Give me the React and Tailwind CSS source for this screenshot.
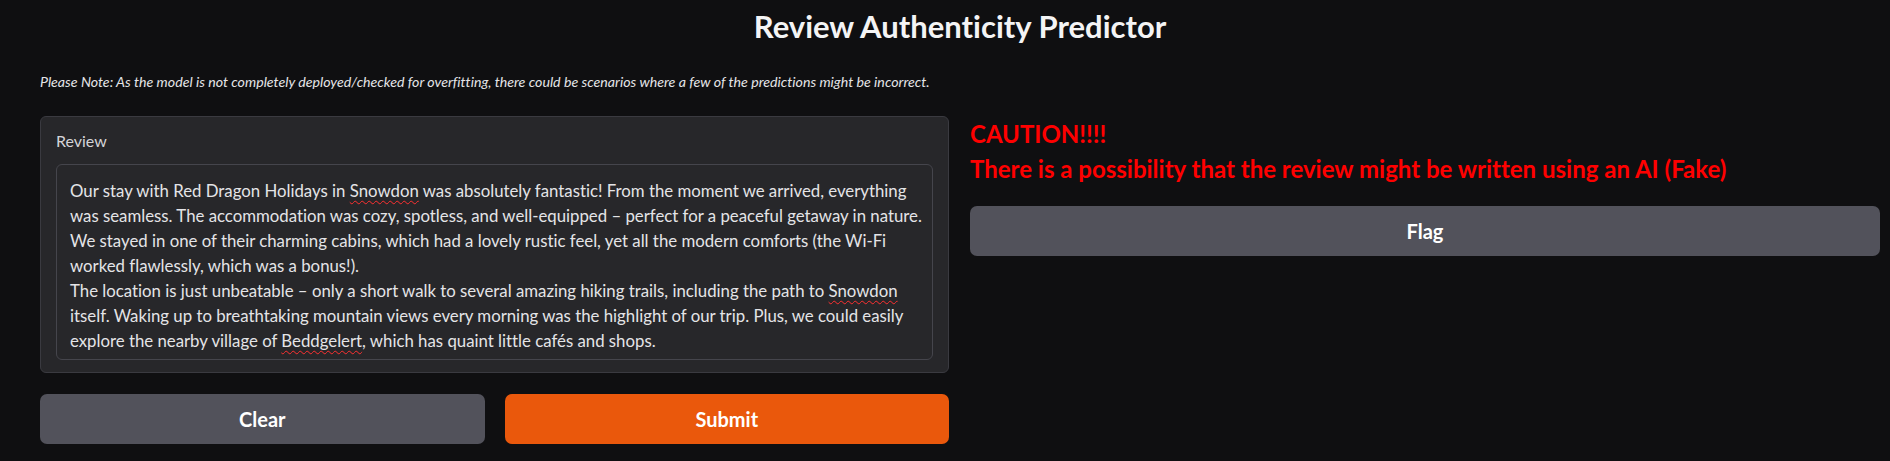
import React from "react";

const lines = [
  ["Our stay with Red Dragon Holidays in ", { w: "Snowdon" }, " was absolutely fantastic! From the moment we arrived, everything"],
  ["was seamless. The accommodation was cozy, spotless, and well-equipped – perfect for a peaceful getaway in nature."],
  ["We stayed in one of their charming cabins, which had a lovely rustic feel, yet all the modern comforts (the Wi-Fi"],
  ["worked flawlessly, which was a bonus!)."],
  ["The location is just unbeatable – only a short walk to several amazing hiking trails, including the path to ", { w: "Snowdon" }],
  ["itself. Waking up to breathtaking mountain views every morning was the highlight of our trip. Plus, we could easily"],
  ["explore the nearby village of ", { w: "Beddgelert" }, ", which has quaint little cafés and shops."],
];

export default function App() {
  return (
    <div
      className="min-h-[461px] w-full bg-[#0f0f11] pl-[40px] pr-[10px] text-[#e4e4e7] [font-variant-ligatures:none]"
      style={{ fontFamily: "Lato, 'Liberation Sans', sans-serif" }}
    >
      <h1 className="pt-[8px] text-center text-[31px] font-bold leading-[36px] text-[#f4f4f5]">
        Review Authenticity Predictor
      </h1>
      <p className="mt-[29px] text-[14.2px] italic leading-[18px] text-[#e4e4e7]">
        Please Note: As the model is not completely deployed/checked for overfitting, there could be scenarios where a few of the predictions might be incorrect.
      </p>
      <div className="mt-[25px] flex gap-[21px]">
        <div className="flex w-[909px] flex-col gap-[21px]">
          <div className="rounded-[6px] border border-[#3a3a40] bg-[#27272a] px-[15px] pb-[12px] pt-[14px]">
            <div className="text-[16px] leading-[20px] text-[#d4d4d8]">Review</div>
            <div className="mt-[13px] h-[196px] rounded-[6px] border border-[#45454c] bg-[#27272a] px-[13px] pt-[13px] text-[16.8px] leading-[25px] text-[#e4e4e7]">
              {lines.map((ln, i) => (
                <div key={i} className="whitespace-nowrap">
                  {ln.map((seg, j) =>
                    typeof seg === "string" ? (
                      <span key={j}>{seg}</span>
                    ) : (
                      <span key={j} className="underline decoration-wavy decoration-[#ff3030] decoration-1 underline-offset-[3px]">
                        {seg.w}
                      </span>
                    )
                  )}
                </div>
              ))}
            </div>
          </div>
          <div className="flex gap-[20px]">
            <button className="h-[50px] flex-1 rounded-[7px] bg-[#52525b] text-[20px] font-bold text-white">Clear</button>
            <button className="h-[50px] flex-1 rounded-[7px] bg-[#ea580c] text-[20px] font-bold text-white">Submit</button>
          </div>
        </div>
        <div className="flex flex-1 flex-col">
          <div className="text-[24px] font-bold leading-[35px] text-[#ff0000]">
            <div>CAUTION!!!!</div>
            <div>There is a possibility that the review might be written using an AI (Fake)</div>
          </div>
          <button className="mt-[20px] h-[50px] w-full rounded-[7px] bg-[#52525b] text-[20px] font-bold text-white">Flag</button>
        </div>
      </div>
    </div>
  );
}
